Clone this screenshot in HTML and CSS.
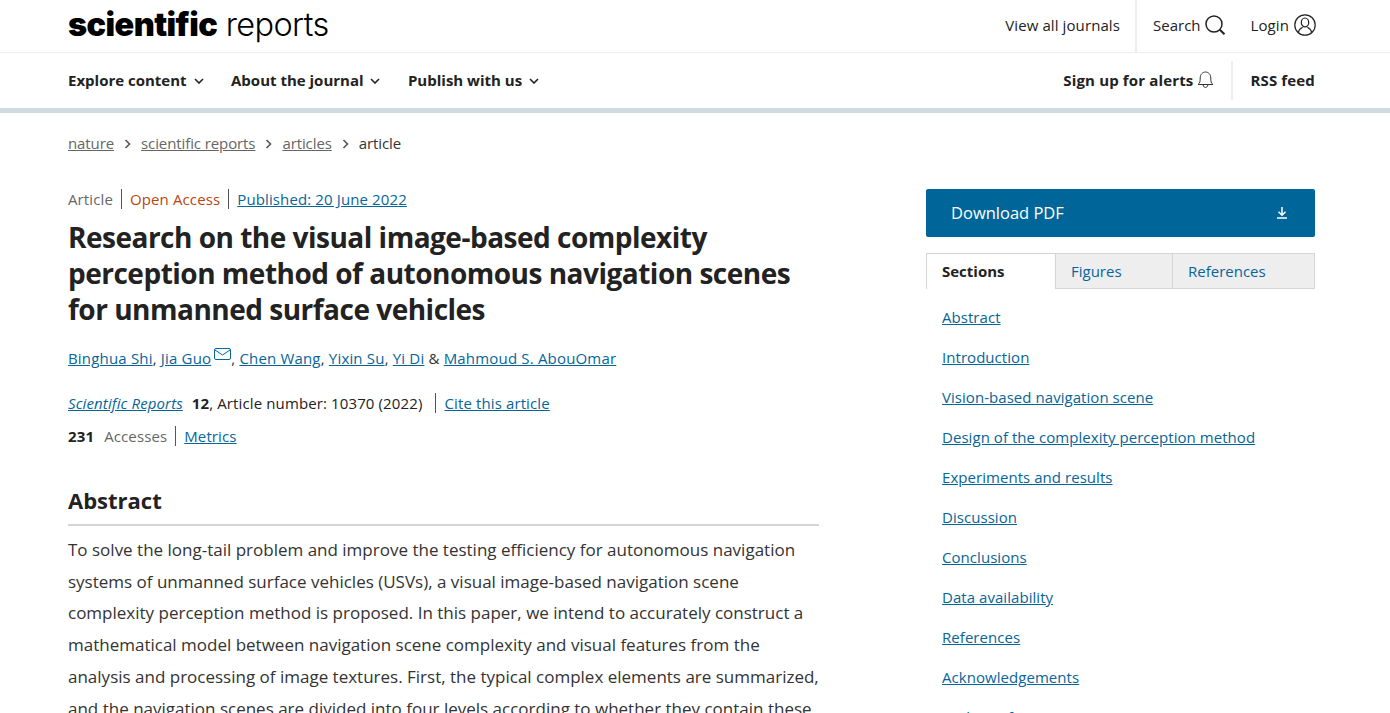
FILE: index.html
```html
<!DOCTYPE html>
<html lang="en">
<head>
    <meta charset="UTF-8">
    <title>Research on the visual image-based complexity perception method | Scientific Reports</title>
    <link rel="stylesheet" href="styles.css">
</head>
<body>
    <header class="top-bar">
        <a class="logo" href="#"><b>scientific</b> reports</a>
        <div class="top-links">
            <a class="top-link journals" href="#">View all journals</a>
            <a class="top-link search" href="#">Search
                <svg width="22" height="22" viewBox="0 0 22 22" fill="none" stroke="#222" stroke-width="1.5"><circle cx="10" cy="10" r="8"/><path d="M15.8 15.8 L20.5 20.3" stroke-width="2"/></svg>
            </a>
            <a class="top-link login" href="#">Login
                <svg width="22" height="22" viewBox="0 0 22 22" fill="none" stroke="#222" stroke-width="1.2"><circle cx="11" cy="11" r="10.2"/><ellipse cx="11" cy="8.4" rx="3.7" ry="4.4"/><path d="M4.4 18.4 C5 15.4 7 14 8.6 13.2 M17.6 18.4 C17 15.4 15 14 13.4 13.2"/></svg>
            </a>
        </div>
    </header>

    <nav class="main-nav">
        <ul class="nav-menu">
            <li>Explore content <svg class="chevron" width="10" height="6" viewBox="0 0 10 6"><path d="M1 1 L5 5 L9 1"/></svg></li>
            <li>About the journal <svg class="chevron" width="10" height="6" viewBox="0 0 10 6"><path d="M1 1 L5 5 L9 1"/></svg></li>
            <li>Publish with us <svg class="chevron" width="10" height="6" viewBox="0 0 10 6"><path d="M1 1 L5 5 L9 1"/></svg></li>
        </ul>
        <div class="nav-right">
            <a class="alerts" href="#">Sign up for alerts
                <svg width="17" height="18" viewBox="0 0 17 18" fill="none" stroke="#333" stroke-width="1"><path d="M1 13.5 C3 12 3.2 10.5 3.2 7 C3.2 3.6 5.5 1 8.5 1 C11.5 1 13.8 3.6 13.8 7 C13.8 10.5 14 12 16 13.5 Z"/><path d="M6.2 14 C6.2 17.2 10.8 17.2 10.8 14"/></svg>
            </a>
            <a class="rss" href="#">RSS feed</a>
        </div>
    </nav>

    <div class="breadcrumbs">
        <a href="#">nature</a>
        <svg class="crumb-sep" width="7" height="10" viewBox="0 0 7 10"><path d="M1.5 1 L5.5 5 L1.5 9"/></svg>
        <a href="#">scientific reports</a>
        <svg class="crumb-sep" width="7" height="10" viewBox="0 0 7 10"><path d="M1.5 1 L5.5 5 L1.5 9"/></svg>
        <a href="#">articles</a>
        <svg class="crumb-sep" width="7" height="10" viewBox="0 0 7 10"><path d="M1.5 1 L5.5 5 L1.5 9"/></svg>
        <span>article</span>
    </div>

    <div class="layout">
        <main class="article">
            <ul class="meta-row">
                <li class="muted">Article</li>
                <li class="open-access">Open Access</li>
                <li><a href="#">Published: 20 June 2022</a></li>
            </ul>
            <h1>Research on the visual image-based complexity perception method of autonomous navigation scenes for unmanned surface vehicles</h1>
            <p class="authors">
                <a href="#">Binghua Shi</a>, <a href="#">Jia Guo</a><svg class="mail" width="17" height="12" viewBox="0 0 17 12" fill="none" stroke="#06659a" stroke-width="1"><rect x="0.5" y="0.5" width="16" height="11" rx="1.5"/><path d="M1 2 L8.5 7 L16 2"/></svg>, <a href="#">Chen Wang</a>, <a href="#">Yixin Su</a>, <a href="#">Yi Di</a> &amp; <a href="#">Mahmoud S. AbouOmar</a>
            </p>
            <ul class="meta-row journal-row">
                <li><a href="#"><i>Scientific Reports</i></a> <b class="volume">12</b>, Article number: 10370 (2022)</li>
                <li><a href="#">Cite this article</a></li>
            </ul>
            <ul class="meta-row access-row">
                <li><b>231</b> <span class="muted accesses">Accesses</span></li>
                <li><a href="#">Metrics</a></li>
            </ul>
            <h2>Abstract</h2>
            <p class="abstract">To solve the long-tail problem and improve the testing efficiency for autonomous navigation systems of unmanned surface vehicles (USVs), a visual image-based navigation scene complexity perception method is proposed. In this paper, we intend to accurately construct a mathematical model between navigation scene complexity and visual features from the analysis and processing of image textures. First, the typical complex elements are summarized, and the navigation scenes are divided into four levels according to whether they contain these</p>
        </main>

        <aside class="sidebar">
            <a class="download" href="#">Download PDF
                <svg width="12" height="13" viewBox="0 0 12 13" fill="none" stroke="#fff" stroke-width="1.5"><path d="M6 1 V9 M2.5 5.8 L6 9.3 L9.5 5.8 M1 12 H11"/></svg>
            </a>
            <div class="tabs">
                <span class="tab active">Sections</span>
                <a class="tab figures" href="#">Figures</a>
                <a class="tab" href="#">References</a>
            </div>
            <ul class="section-list">
                <li><a href="#">Abstract</a></li>
                <li><a href="#">Introduction</a></li>
                <li><a href="#">Vision-based navigation scene</a></li>
                <li><a href="#">Design of the complexity perception method</a></li>
                <li><a href="#">Experiments and results</a></li>
                <li><a href="#">Discussion</a></li>
                <li><a href="#">Conclusions</a></li>
                <li><a href="#">Data availability</a></li>
                <li><a href="#">References</a></li>
                <li><a href="#">Acknowledgements</a></li>
                <li><a href="#">Author information</a></li>
            </ul>
        </aside>
    </div>
</body>
</html>
```

FILE: styles.css
```css
html, body {
    height: 713px;
    overflow: hidden;
}
body {
    margin: 0;
    font-family: "Open Sans", "Noto Sans", sans-serif;
    font-size: 15px;
    color: #222;
    background-color: #fff;
}
a {
    color: #06659a;
}
ul {
    list-style: none;
    margin: 0;
    padding: 0;
}

/* top bar */
.top-bar {
    display: flex;
    justify-content: space-between;
    height: 52px;
    padding: 0 74px 0 68px;
    border-bottom: 1px solid #eee;
}
.logo {
    font-family: Inter, sans-serif;
    font-size: 32.5px;
    font-weight: 300;
    line-height: 50px;
    letter-spacing: -0.6px;
    color: #000;
    text-decoration: none;
}
.logo b {
    font-weight: 900;
}
.top-links {
    display: flex;
    align-items: center;
    padding-bottom: 2px;
}
.top-link {
    display: flex;
    align-items: center;
    gap: 5px;
    color: #222;
    text-decoration: none;
}
.journals {
    height: 54px;
    margin-bottom: -2px;
    padding-right: 15px;
    padding-bottom: 2px;
    box-sizing: border-box;
    border-right: 2px solid #eee;
    margin-right: 16px;
    letter-spacing: 0.1px;
}
.search {
    gap: 3px;
    margin-right: 25px;
}
.login {
    letter-spacing: 0.1px;
}

/* main navigation */
.main-nav {
    display: flex;
    justify-content: space-between;
    align-items: center;
    height: 55px;
    padding: 0 75px 0 68px;
    border-bottom: 5px solid #cedbe3;
    font-weight: 700;
}
.nav-menu {
    display: flex;
    gap: 27.5px;
    padding-bottom: 2px;
}
.chevron {
    fill: none;
    stroke: #222;
    stroke-width: 1.6;
    margin-left: 3px;
    vertical-align: 2px;
}
.nav-right {
    display: flex;
    align-items: center;
    height: 39px;
    letter-spacing: 0.15px;
}
.alerts {
    display: flex;
    align-items: center;
    gap: 4px;
    height: 39px;
    padding-right: 17px;
    padding-bottom: 2px;
    box-sizing: border-box;
    border-right: 2px solid #eee;
    margin-right: 17px;
    color: #222;
    text-decoration: none;
}
.rss {
    padding-bottom: 2px;
    color: #222;
    text-decoration: none;
}

/* breadcrumbs */
.breadcrumbs {
    display: flex;
    align-items: center;
    gap: 10px;
    padding: 20px 68px 0;
    line-height: 21px;
    letter-spacing: -0.1px;
    color: #333;
}
.breadcrumbs a {
    color: #666;
}
.crumb-sep {
    fill: none;
    stroke: #555;
    stroke-width: 1.6;
}

/* two columns */
.layout {
    display: flex;
    justify-content: space-between;
    padding: 35px 75px 0 68px;
}
.article {
    width: 751px;
}
.sidebar {
    width: 389px;
}

/* article head */
.meta-row {
    display: flex;
    line-height: 20px;
    letter-spacing: 0.12px;
}
.meta-row li + li {
    margin-left: 8px;
    padding-left: 8px;
    border-left: 1px solid #555;
}
.muted {
    color: #666;
}
.open-access {
    color: #b7460f;
}
h1 {
    margin: 10px 0 0;
    font-size: 28px;
    font-weight: 700;
    line-height: 36px;
    letter-spacing: -0.5px;
    color: #222;
}
.authors {
    margin: 20px 0 0;
    line-height: 22px;
    letter-spacing: 0.18px;
    color: #333;
}
.mail {
    margin-left: 3px;
    vertical-align: 4px;
}
.journal-row {
    margin-top: 24px;
}
.journal-row li + li {
    margin-left: 13px;
}
.volume {
    margin-left: 5px;
}
.access-row {
    margin-top: 13px;
}
.accesses {
    margin-left: 6px;
}
h2 {
    margin: 38px 0 0;
    padding-bottom: 7px;
    border-bottom: 2px solid #d5d5d5;
    font-size: 22px;
    font-weight: 700;
    line-height: 33px;
    color: #222;
}
.abstract {
    margin: 8px 0 0;
    font-size: 17px;
    line-height: 31.7px;
    color: #333;
}

/* sidebar */
.download {
    display: flex;
    justify-content: space-between;
    align-items: center;
    height: 48px;
    box-sizing: border-box;
    padding: 0 27px 2px 25px;
    border-radius: 2px;
    background-color: #006699;
    color: #fff;
    font-size: 16.5px;
    text-decoration: none;
}
.tabs {
    display: flex;
    margin-top: 16px;
    height: 36px;
}
.tab {
    display: flex;
    align-items: center;
    flex: 1;
    box-sizing: border-box;
    padding-left: 15px;
    border: 1px solid #d5d5d5;
    border-left: 0;
    background-color: #eee;
    text-decoration: none;
}
.tab.active {
    flex: 0 0 130px;
    padding-bottom: 2px;
    border-left: 1px solid #d5d5d5;
    border-bottom: 0;
    background-color: #fff;
    font-weight: 700;
    color: #222;
}
.figures {
    flex: 0 0 117px;
}
.section-list {
    padding: 17px 0 0 16px;
    letter-spacing: 0.05px;
}
.section-list li {
    line-height: 22px;
    margin-bottom: 18px;
}
```
